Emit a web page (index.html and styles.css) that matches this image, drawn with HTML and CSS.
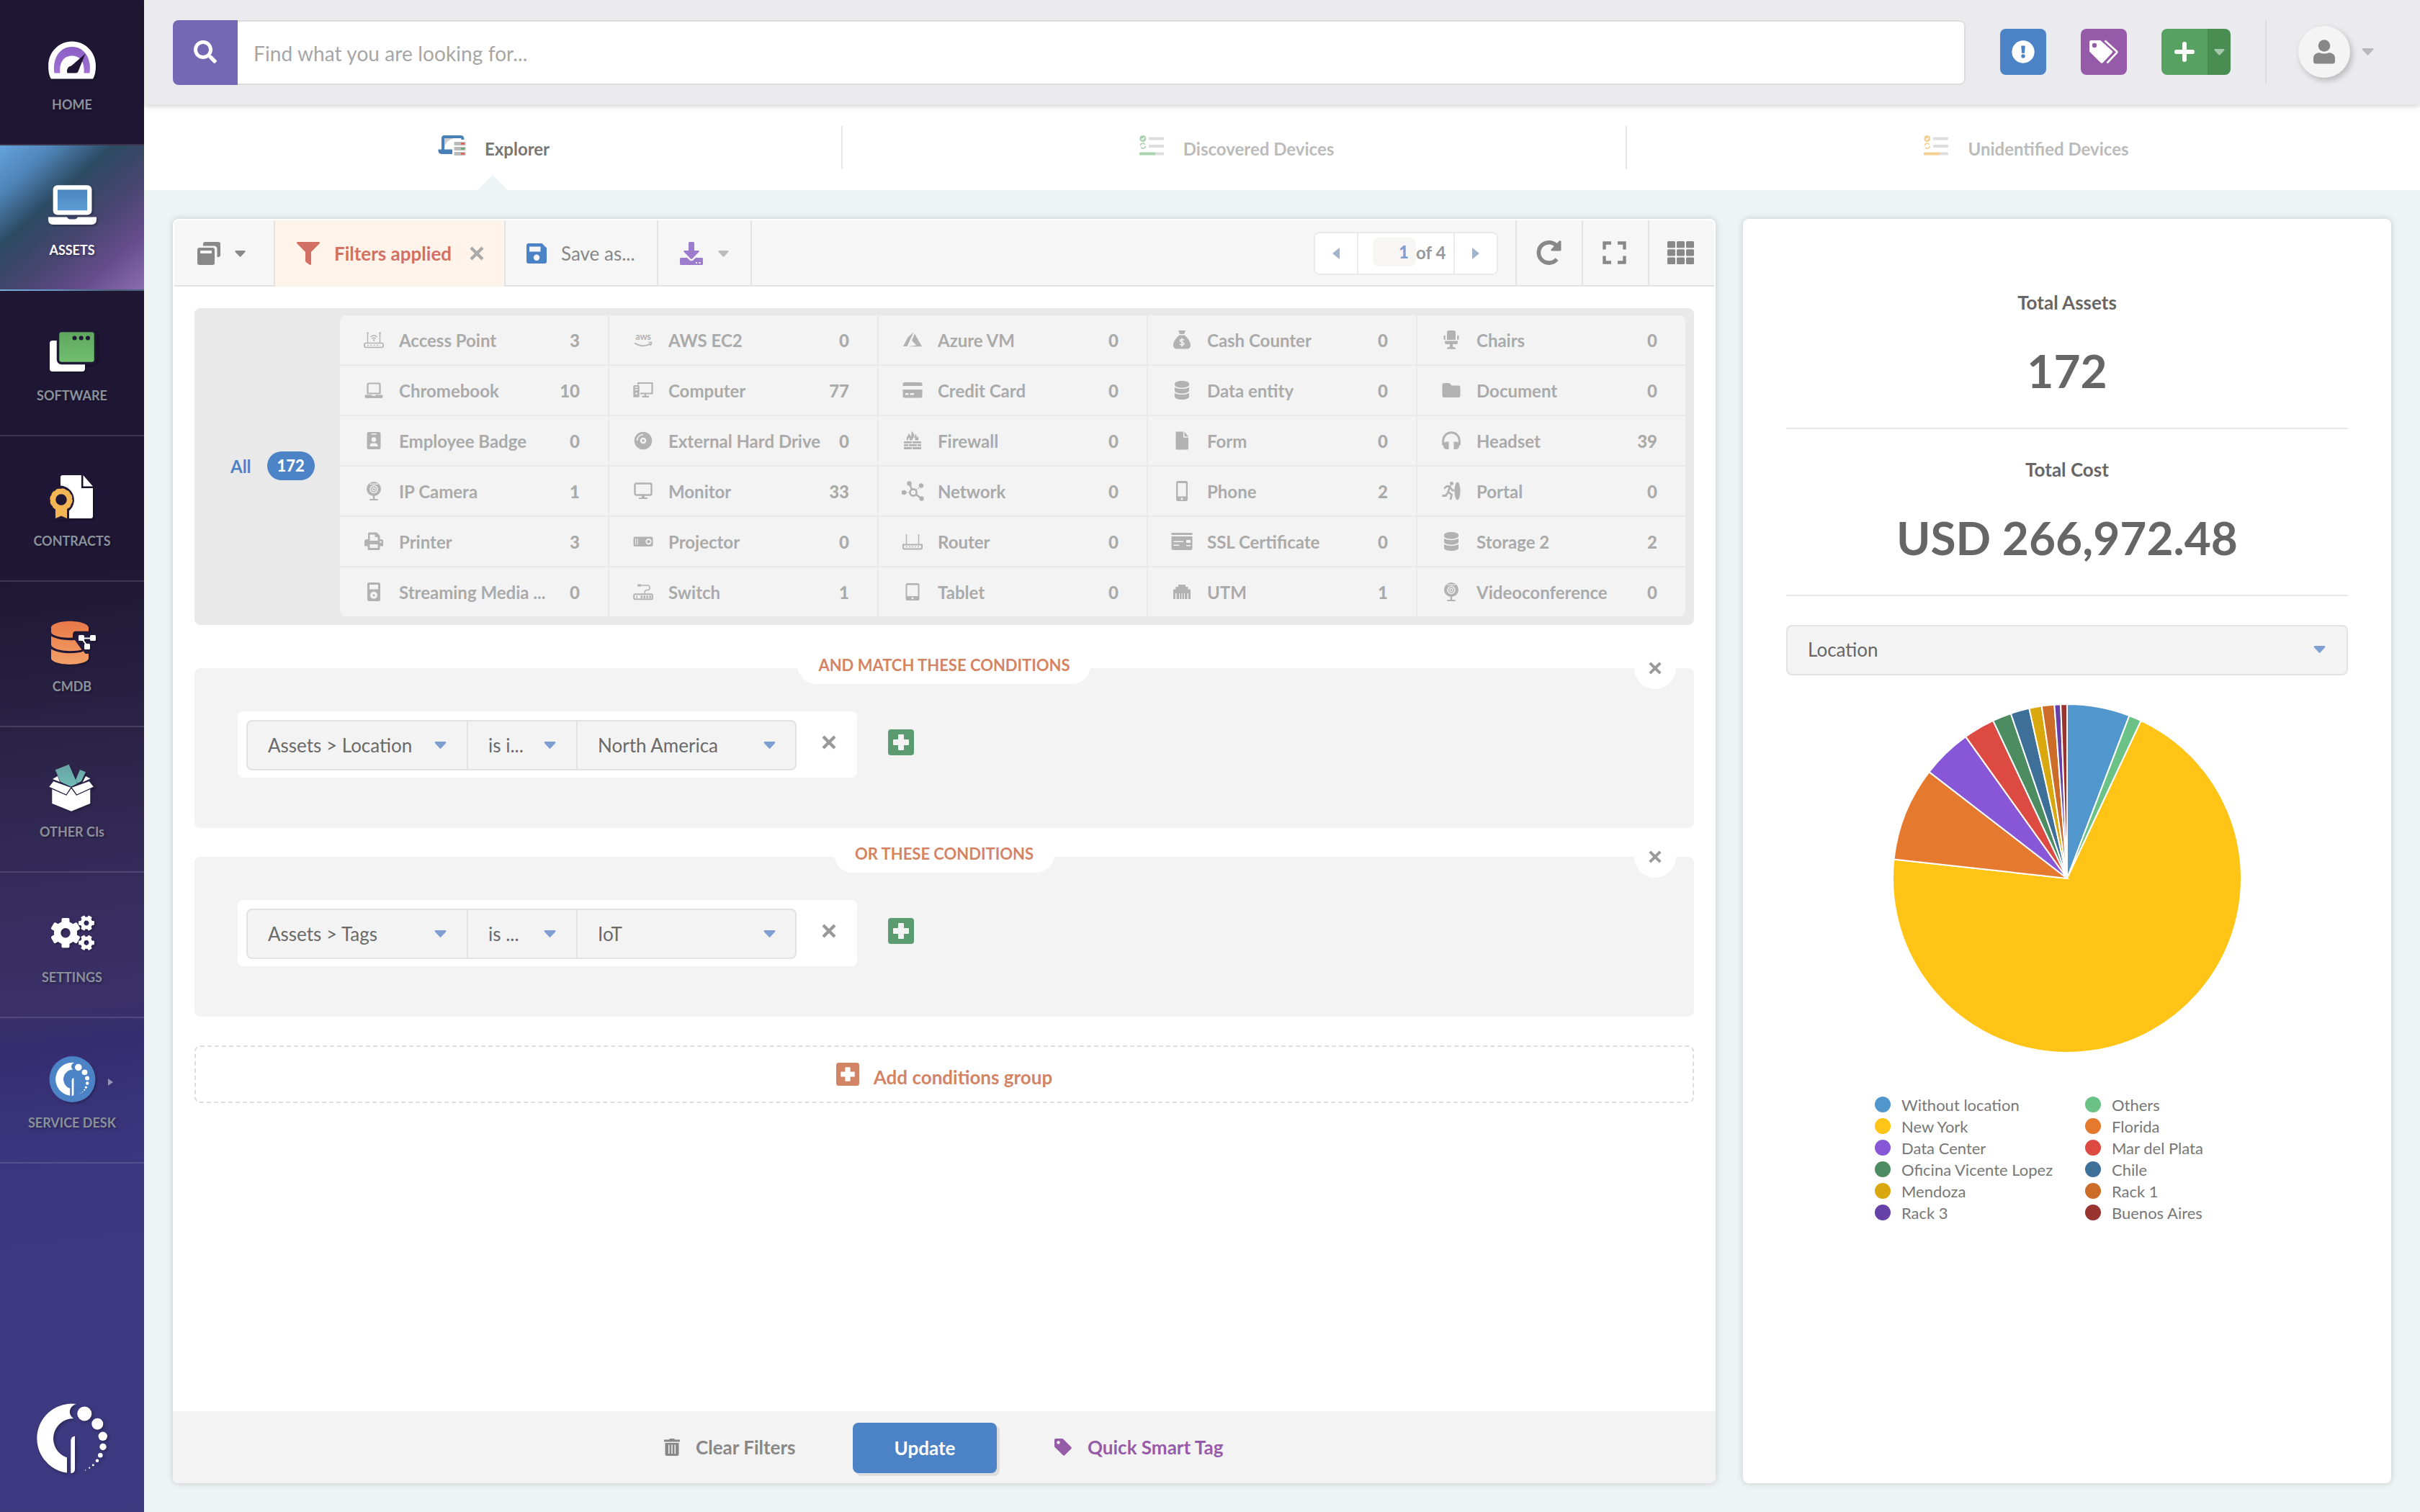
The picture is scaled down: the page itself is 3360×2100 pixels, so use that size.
FILE: index.html
```html
<!DOCTYPE html>
<html lang="en">
<head>
<meta charset="utf-8">
<title>Assets Explorer</title>
<link rel="stylesheet" href="styles.css">
</head>
<body>
<svg class="defs" width="0" height="0" aria-hidden="true">
  <defs>
    <linearGradient id="g-purple" x1="0" y1="0" x2="0" y2="1"><stop offset="0" stop-color="#8a5fc4"/><stop offset="1" stop-color="#a070d4"/></linearGradient>
    <linearGradient id="g-blue" x1="0" y1="0" x2="0" y2="1"><stop offset="0" stop-color="#4a82bd"/><stop offset="1" stop-color="#5f9fd6"/></linearGradient>
    <linearGradient id="g-green" x1="0" y1="0" x2="0" y2="1"><stop offset="0" stop-color="#5ea65e"/><stop offset="1" stop-color="#72c070"/></linearGradient>
    <linearGradient id="g-orange" x1="0" y1="0" x2="0" y2="1"><stop offset="0" stop-color="#e97848"/><stop offset="1" stop-color="#f3a068"/></linearGradient>
    <linearGradient id="g-teal" x1="0" y1="0" x2="0" y2="1"><stop offset="0" stop-color="#65a3a3"/><stop offset="1" stop-color="#73bcb8"/></linearGradient>
  </defs>
  <symbol id="gear" viewBox="-21 -21 42 42">
    <circle r="11.4" fill="none" stroke="currentColor" stroke-width="9.4"/>
    <g fill="currentColor">
      <rect x="-5.5" y="-20.8" width="11" height="9" rx="2"/>
      <rect x="-5.5" y="-20.8" width="11" height="9" rx="2" transform="rotate(60)"/>
      <rect x="-5.5" y="-20.8" width="11" height="9" rx="2" transform="rotate(120)"/>
      <rect x="-5.5" y="-20.8" width="11" height="9" rx="2" transform="rotate(180)"/>
      <rect x="-5.5" y="-20.8" width="11" height="9" rx="2" transform="rotate(240)"/>
      <rect x="-5.5" y="-20.8" width="11" height="9" rx="2" transform="rotate(300)"/>
    </g>
  </symbol>
  <symbol id="brand" viewBox="20 18 100 100">
    <g fill="#fff">
      <path d="M75 20C65 23 62.500 34 71 40A28 28 0 0 0 62 94.500V115.500A48 48 0 0 1 75 20Z"/>
      <path d="M67.300 70C67.800 67 70 65 73 64.500V111C73 114 70.500 116 67.300 116Z"/>
      <circle cx="86.300" cy="33.500" r="10"/><circle cx="104.300" cy="47.700" r="8"/><circle cx="111.800" cy="64.800" r="6.200"/>
      <circle cx="112" cy="79.500" r="4.700"/><circle cx="108.300" cy="91.200" r="3.300"/><circle cx="104" cy="98.800" r="2.300"/>
      <circle cx="98.300" cy="104.700" r="1.500"/><circle cx="93.200" cy="108.700" r="1.100"/><circle cx="87.500" cy="112" r=".7"/>
    </g>
  </symbol>
  <symbol id="caret" viewBox="0 0 16 10"><path fill="currentColor" d="M1.500 0h13a1.300 1.300 0 0 1 1 2.200L9 9.200a1.400 1.400 0 0 1-2 0L.5 2.200A1.300 1.300 0 0 1 1.500 0z"/></symbol>
  <symbol id="cross" viewBox="0 0 20 20"><path stroke="currentColor" stroke-width="4.400" d="M2 2L18 18M18 2L2 18"/></symbol>
  <symbol id="plus-square" viewBox="0 0 36 36"><path fill="currentColor" fill-rule="evenodd" d="M4 0h28a4 4 0 0 1 4 4v28a4 4 0 0 1-4 4H4a4 4 0 0 1-4-4V4a4 4 0 0 1 4-4zM15 7a1 1 0 0 0-1 1v6H8a1 1 0 0 0-1 1v6a1 1 0 0 0 1 1h6v6a1 1 0 0 0 1 1h6a1 1 0 0 0 1-1v-6h6a1 1 0 0 0 1-1v-6a1 1 0 0 0-1-1h-6V8a1 1 0 0 0-1-1z"/></symbol>
  <symbol id="search" viewBox="0 0 512 512"><path fill="currentColor" d="M505 442.700L405.300 343c-4.500-4.500-10.600-7-17-7H372c27.600-35.300 44-79.700 44-128C416 93.100 322.900 0 208 0S0 93.100 0 208s93.100 208 208 208c48.300 0 92.700-16.400 128-44v16.300c0 6.400 2.500 12.500 7 17l99.700 99.700c9.400 9.400 24.600 9.400 33.900 0l28.300-28.300c9.400-9.400 9.400-24.600.1-34zM208 336c-70.700 0-128-57.200-128-128 0-70.700 57.200-128 128-128 70.700 0 128 57.200 128 128 0 70.700-57.200 128-128 128z"/></symbol>
  <symbol id="list" viewBox="0 0 34 28">
    <circle cx="4.800" cy="4.500" r="4.500" fill="currentColor"/><path d="M2.800 4.500l1.600 1.700 2.600-3.200" fill="none" stroke="#fff" stroke-width="1.300"/>
    <circle cx="4.800" cy="14.700" r="3.500" fill="none" stroke="currentColor" stroke-width="1.700" stroke-dasharray="8.500 2.500"/>
    <g fill="#ddd"><rect x="13" y="2.500" width="21" height="4" rx="1"/><rect x="13" y="13" width="21" height="4" rx="1"/><rect x="20" y="23.500" width="14" height="4" rx="1"/></g>
    <rect y="23.500" width="22" height="4" rx="1" fill="currentColor"/>
  </symbol>

  <symbol id="i-ap" viewBox="0 0 28 28"><g fill="none" stroke="currentColor"><rect x="1" y="18.500" width="26" height="6" rx="2" stroke-width="1.700"/><path stroke-width="1.400" d="M5.500 5v13M22.500 5v13M9.500 10q4.500-4.500 9 0M11.500 12.500q2.500-2.500 5 0"/><path stroke-width="1.600" stroke-dasharray="1.800 2.600" d="M5 21.500h18"/></g><circle cx="14" cy="14.500" r="1.200" fill="currentColor"/><circle cx="5.500" cy="4.500" r="1.300" fill="currentColor"/><circle cx="22.500" cy="4.500" r="1.300" fill="currentColor"/></symbol>
  <symbol id="i-router" viewBox="0 0 28 28"><g fill="none" stroke="currentColor"><path stroke-width="2" d="M1 18.500h26v4a2 2 0 0 1-2 2H3a2 2 0 0 1-2-2z"/><path stroke-width="1.400" d="M5.500 4v14M22.500 4v14"/><path stroke-width="1.600" stroke-dasharray="1.800 2.200" d="M5 21.500h18"/></g></symbol>
  <symbol id="i-azure" viewBox="0 0 28 28"><path fill="currentColor" d="M15.500 3.500L7.500 10.500 1 23h5.500zM17 5.500l-4 9.500 6.500 6.500-11.500 1.800H27z"/></symbol>
  <symbol id="i-money" viewBox="0 0 28 28"><path fill="currentColor" d="M9 1h10l-2 5h-6zM10.500 7.500h7C22 11 26 16.500 26 21.500c0 3-2 5-5 5H7c-3 0-5-2-5-5 0-5 4-10.500 8.500-14z"/><path fill="none" stroke="#f3f3f3" stroke-width="1.600" d="M17 14.500c-1-1.500-5.600-1.500-5.600.7s5.400 1.600 5.400 4-4.800 2.300-5.800.5M14 11.500v12"/></symbol>
  <symbol id="i-chair" viewBox="0 0 28 28"><path fill="currentColor" d="M10.500 1h7a2.500 2.500 0 0 1 2.500 2.500V14H8V3.500A2.500 2.500 0 0 1 10.500 1zM3.500 8h2.300v6H5a1.500 1.500 0 0 1-1.500-1.500zM22.200 8h2.300v4.500A1.500 1.500 0 0 1 23 14h-.8zM5 15.500h18V18a2 2 0 0 1-2 2h-5v3.500l4 1.500v1.800H8V25l4-1.500V20H7a2 2 0 0 1-2-2z"/></symbol>
  <symbol id="i-laptop" viewBox="0 0 28 28"><path fill="none" stroke="currentColor" stroke-width="2.200" d="M5.500 18.500V6a1.500 1.500 0 0 1 1.500-1.500h14A1.500 1.500 0 0 1 22.500 6v12.500z"/><path fill="currentColor" d="M1.500 20.500h9.500l1 1.200h4l1-1.200h9.500v2.200a2.300 2.300 0 0 1-2.300 2.300H3.800a2.300 2.300 0 0 1-2.300-2.300z"/></symbol>
  <symbol id="i-pc" viewBox="0 0 28 28"><path fill="none" stroke="currentColor" stroke-width="2.200" d="M7 6V4h19.500v14.500H10M17 18.500v4M12.500 22.800h9.500"/><path fill="currentColor" fill-rule="evenodd" d="M1.500 7h6a1.200 1.200 0 0 1 1.200 1.200V22.500a1.200 1.200 0 0 1-1.200 1.200h-6A1.200 1.200 0 0 1 .3 22.500V8.200A1.200 1.200 0 0 1 1.500 7zM2.500 9v1.500h4V9zM2.500 12.500V14h4v-1.500zM4.500 17a1.400 1.400 0 1 0 0 2.800 1.400 1.400 0 0 0 0-2.800z"/></symbol>
  <symbol id="i-card" viewBox="0 0 28 28"><path fill="currentColor" fill-rule="evenodd" d="M3 3h22a2.500 2.500 0 0 1 2.500 2.500V8H.5V5.500A2.500 2.500 0 0 1 3 3zM.5 13h27v9a2.500 2.500 0 0 1-2.500 2.500H3A2.500 2.500 0 0 1 .5 22zM4 18v2.500h4.500V18zM10.500 18v2.500H16V18z"/></symbol>
  <symbol id="i-db" viewBox="0 0 28 28"><path fill="currentColor" d="M14 1c6 0 10 1.700 10 4v1.500c0 2.300-4 4-10 4s-10-1.700-10-4V5c0-2.300 4-4 10-4zM4 9.800c2 1.500 5.700 2.300 10 2.300s8-.8 10-2.300v4.700c0 2.300-4 4-10 4s-10-1.700-10-4zM4 17.800c2 1.500 5.700 2.300 10 2.300s8-.8 10-2.300V23c0 2.300-4 4-10 4S4 25.300 4 23z"/></symbol>
  <symbol id="i-folder" viewBox="0 0 28 28"><path fill="currentColor" d="M4 4h7.500l3 3.500H24A2.500 2.500 0 0 1 26.500 10v11.500A2.500 2.500 0 0 1 24 24H4a2.500 2.500 0 0 1-2.500-2.500v-15A2.500 2.500 0 0 1 4 4z"/></symbol>
  <symbol id="i-badge" viewBox="0 0 28 28"><path fill="currentColor" fill-rule="evenodd" d="M7 2h14a2.500 2.500 0 0 1 2.500 2.500v19A2.500 2.500 0 0 1 21 26H7a2.500 2.500 0 0 1-2.500-2.500v-19A2.500 2.500 0 0 1 7 2zM10.500 4v1.500h7V4zM14 9.300a3.200 3.200 0 1 0 0 6.500 3.200 3.200 0 0 0 0-6.500zM8.500 22h11v-1c0-2-1.500-3.500-3.500-3.500h-4c-2 0-3.500 1.500-3.500 3.500z"/></symbol>
  <symbol id="i-disc" viewBox="0 0 28 28"><circle cx="14" cy="14" r="8.300" fill="none" stroke="currentColor" stroke-width="8"/><circle cx="14" cy="14" r="1.800" fill="currentColor"/><path fill="none" stroke="#f3f3f3" stroke-width="1.600" d="M5.500 14A8.500 8.500 0 0 1 14 5.500"/></symbol>
  <symbol id="i-fire" viewBox="0 0 28 28"><path fill="currentColor" d="M6 13.500C4.500 9 8.500 8 8.500 4c2 1 2.500 3 2.500 4.500C13 6.500 13 3.500 12 1c4 1.500 4.500 5 4.500 8 1-1 1.500-2.500 1.200-4.500 2 1.500 2 3 1.800 5 1-.3 1.500-1.200 1.500-2 1.500 2 1.500 4.500 1 6h-5c1.500-2 0-4-1-5-.5 2-2.500 3-2 5H10c.5-1.500 0-3-1-4-.5 1.500-1.500 2.500-1 4zM2 15h11v2.800H2zM14 15h12v2.800H14zM2 19h6v2.800H2zM9 19h11v2.800H9zM21 19h5v2.800h-5zM2 23h11v3H2zM14 23h12v3H14z"/></symbol>
  <symbol id="i-file" viewBox="0 0 28 28"><path fill="currentColor" d="M6 1.500h10v8.300h7V25a1.500 1.500 0 0 1-1.500 1.500h-14A1.500 1.500 0 0 1 5.500 25V3zM17.500 1.500L23 8.300h-5.500z"/></symbol>
  <symbol id="i-head" viewBox="0 0 28 28"><path fill="none" stroke="currentColor" stroke-width="3" d="M2.700 20.500V14a11.300 11.300 0 0 1 22.600 0v6.500"/><path fill="currentColor" d="M7.500 15.500h3V26h-3a4.500 4.500 0 0 1-4.500-4.500V20a4.500 4.500 0 0 1 4.500-4.500zM17.500 15.500h3A4.500 4.500 0 0 1 25 20v1.500a4.500 4.500 0 0 1-4.500 4.500h-3z"/></symbol>
  <symbol id="i-cam" viewBox="0 0 28 28"><circle cx="14" cy="11" r="10" fill="currentColor"/><circle cx="14" cy="11.500" r="5" fill="none" stroke="#f3f3f3" stroke-width="1.500"/><circle cx="14" cy="11.500" r="2.200" fill="none" stroke="#f3f3f3" stroke-width="1.200"/><path stroke="#f3f3f3" stroke-width="1.200" d="M8 4.200h12"/><path fill="currentColor" d="M12.800 20h2.400v5h4.500v2H8.300v-2h4.500z"/></symbol>
  <symbol id="i-mon" viewBox="0 0 28 28"><rect x="2.500" y="3.500" width="23" height="16" rx="2" fill="none" stroke="currentColor" stroke-width="2.400"/><path fill="currentColor" d="M12 20h4v3h4v2H8v-2h4z"/></symbol>
  <symbol id="i-net" viewBox="0 0 32 28"><g fill="currentColor"><circle cx="4" cy="16" r="3.200"/><circle cx="11.500" cy="3.500" r="3.200"/><circle cx="28" cy="6.500" r="3.200"/><circle cx="28.500" cy="24.500" r="3.200"/></g><circle cx="17" cy="16" r="4.600" fill="none" stroke="currentColor" stroke-width="2.600"/><path stroke="currentColor" stroke-width="2.400" d="M12 4l3 8M21 19l7 5"/><path stroke="currentColor" stroke-width="1.400" stroke-dasharray="1.600 1.600" d="M7 16h5.500M21 12.500l5-4"/></symbol>
  <symbol id="i-phone" viewBox="0 0 28 28"><path fill="currentColor" fill-rule="evenodd" d="M8.500 0h11A2.500 2.500 0 0 1 22 2.500v23a2.500 2.500 0 0 1-2.500 2.500h-11A2.500 2.500 0 0 1 6 25.500v-23A2.500 2.500 0 0 1 8.500 0zM8.300 3v18.500h11.400V3zM14 23.200a1.600 1.600 0 1 0 0 3.200 1.600 1.600 0 0 0 0-3.200z"/></symbol>
  <symbol id="i-portal" viewBox="0 0 28 28"><g fill="currentColor"><ellipse cx="22.500" cy="14" rx="4" ry="12.500"/><circle cx="14.500" cy="3.500" r="2.500"/></g><path fill="none" stroke="currentColor" stroke-width="2.800" stroke-linejoin="round" d="M4 10.500l3.500-3h5l-3 7.500 5 4-1.500 7M1.500 20.500h5l2.500-4M12.500 9l3 4h3"/></symbol>
  <symbol id="i-print" viewBox="0 0 28 28"><path fill="currentColor" fill-rule="evenodd" d="M7.500 1.500H18l4.500 4.500v5H24a3 3 0 0 1 3 3v6.500h-4.500v4a1.500 1.500 0 0 1-1.500 1.500H7a1.500 1.500 0 0 1-1.500-1.500v-4H1V14a3 3 0 0 1 3-3h2V3a1.500 1.500 0 0 1 1.500-1.500zM8.500 4.500V13h11V8h-4V4.500zM8.500 18v5h11v-5zM23.500 13.500a1.300 1.300 0 1 0 0 2.600 1.300 1.300 0 0 0 0-2.600z"/></symbol>
  <symbol id="i-proj" viewBox="0 0 28 28"><path fill="currentColor" fill-rule="evenodd" d="M3 7.500h22a2.500 2.500 0 0 1 2.500 2.500v8.500A2.500 2.500 0 0 1 25 21H3a2.500 2.500 0 0 1-2.500-2.500V10A2.500 2.500 0 0 1 3 7.500zM3 10v8.500h1V10zM5.700 10v8.500h1V10zM21.500 10a4.200 4.200 0 1 0 0 8.400 4.200 4.200 0 0 0 0-8.400z"/><circle cx="21.500" cy="14.200" r="2.300" fill="currentColor"/></symbol>
  <symbol id="i-ssl" viewBox="0 0 32 28"><path fill="currentColor" fill-rule="evenodd" d="M1.500 2h29v3h-29zM1.500 7h29v16.500a2.500 2.500 0 0 1-2.500 2.500H4a2.500 2.500 0 0 1-2.500-2.500zM4.500 13.500V15H18v-1.500zM4.500 18.500V20H12v-1.500zM22 12v4h6v-4zM22 19v1.500h6V19z"/></symbol>
  <symbol id="i-ipod" viewBox="0 0 28 28"><path fill="currentColor" fill-rule="evenodd" d="M7.500 1h13A2.500 2.500 0 0 1 23 3.500v21a2.500 2.500 0 0 1-2.500 2.500h-13A2.500 2.500 0 0 1 5 24.500v-21A2.500 2.500 0 0 1 7.500 1zM8 4v6.500h12V4zM14 13.800a5 5 0 1 0 0 10 5 5 0 0 0 0-10zM14 17.300a1.500 1.500 0 1 1 0 3 1.500 1.500 0 0 1 0-3z"/></symbol>
  <symbol id="i-switch" viewBox="0 0 28 28"><path fill="none" stroke="currentColor" stroke-width="1.500" d="M7 5h13a3 3 0 0 1 0 6.500q-4 0-4 4v1.500"/><rect x="6" y="3.500" width="5" height="3" fill="currentColor"/><rect x="1.200" y="17.200" width="25.600" height="7" rx="1.500" fill="none" stroke="currentColor" stroke-width="2"/><path fill="none" stroke="currentColor" stroke-width="3.500" stroke-dasharray="2.600 1.300" d="M10.500 21H25M4.500 21H6"/></symbol>
  <symbol id="i-tablet" viewBox="0 0 28 28"><path fill="currentColor" fill-rule="evenodd" d="M7 2h14a2.500 2.500 0 0 1 2.500 2.500v19A2.500 2.500 0 0 1 21 26H7a2.500 2.500 0 0 1-2.500-2.500v-19A2.500 2.500 0 0 1 7 2zM6.500 4.500V20h15V4.500zM14 21.600a1.400 1.400 0 1 0 0 2.800 1.400 1.400 0 0 0 0-2.800z"/></symbol>
  <symbol id="i-utm" viewBox="0 0 28 28"><path fill="currentColor" d="M9 4h10v3h3.500v3.500H26V24h-3v-8h-1.500v8H18v-8h-1v8h-2.500v-8h-1v8H11v-8h-1v8H6.500v-8H5v8H2V10.500h3.500V7H9z"/></symbol>
</svg>

<div class="app">
  <nav class="sidebar">
    <a class="nav-item"><svg class="nav-icon" viewBox="0 0 80 68"><path fill="#fff" d="M11 59.500C8 55 7 48 7.200 41 7.200 22 22 7.500 40 7.500S73 22 73 41c0 7-1 14-4 18.500z"/><path fill="url(#g-purple)" d="M15.500 51.500C12.500 31 23 15 40 15s27.500 16 24.500 36.500H56.500C58 36 51 27.500 40 27.500S22 36 23.500 51.500z"/><path fill="#1e1632" d="M58.500 24.500L49 48c-.5 2.500-2 3.500-4 3.500H33.500c-1.500-4 .5-9.500 5.500-10z"/></svg><span>HOME</span></a>
    <a class="nav-item active"><svg class="nav-icon" viewBox="0 0 80 68"><rect x="16.800" y="8.300" width="47.500" height="35" rx="3" fill="url(#g-blue)" stroke="#fff" stroke-width="6.300"/><path fill="#fff" d="M7 49.500h26q1.500 3 4.500 3h6q3 0 4.500-3h26V53q0 7-7 7H14q-7 0-7-7z"/></svg><span>ASSETS</span></a>
    <a class="nav-item"><svg class="nav-icon" viewBox="0 0 80 68"><rect x="9" y="19" width="49" height="43" rx="4" fill="#fff"/><rect x="20.500" y="5.500" width="52" height="45" rx="5" fill="url(#g-green)" stroke="#1f1735" stroke-width="3.500"/><g fill="#1f1735"><circle cx="43.500" cy="15.500" r="3"/><circle cx="52.700" cy="15.500" r="3"/><circle cx="62" cy="15.500" r="3"/></g></svg><span>SOFTWARE</span></a>
    <a class="nav-item"><svg class="nav-icon" viewBox="0 0 80 68"><path fill="#fff" d="M27 4h26v18h16v39q0 3-3 3H27q-3 0-3-3V7q0-3 3-3zM55.500 4L69 19.500H55.500z"/><path fill="#201837" d="M25 18.500a20 20 0 0 1 11 35V66H14V53.500a20 20 0 0 1 11-35z"/><path fill="#f4b554" d="M17 49h16v15l-8-3.500-8 3.500z"/><circle cx="25" cy="38" r="11.500" fill="none" stroke="#f4b554" stroke-width="7.500"/><circle cx="25" cy="38" r="14.500" fill="none" stroke="#f4b554" stroke-width="2.500" stroke-dasharray="4.600 3"/></svg><span>CONTRACTS</span></a>
    <a class="nav-item"><svg class="nav-icon" viewBox="0 0 80 68"><path fill="url(#g-orange)" d="M37 4.700c14 0 26 4 26 9v5H45q-3.500 0-4 4v4.800C24 29 11 24 11 20v-6.300c0-5 12-9 26-9zM11 25.500c7 4 19 6.500 33 5.500l9.500 13.500C40 48 14 46 11 38zM11 43.500c10 6.500 34 7.500 45 3l2.500 3.500h4.500v6c0 5-12 8.800-26 8.800S11 61 11 56z"/><path stroke="#fff" stroke-width="2" d="M53 28.500h16M53 28l8 11"/><g fill="#fff"><rect x="49" y="24" width="8" height="8" rx="1.500"/><rect x="65" y="24" width="8" height="8" rx="1.500"/><rect x="57" y="36" width="8" height="8" rx="1.500"/></g></svg><span>CMDB</span></a>
    <a class="nav-item"><svg class="nav-icon" viewBox="0 0 80 68"><path fill="#fff" d="M20 18l-7 4 10 4zM59 18l6.500 3.500-11 5z"/><path fill="url(#g-teal)" d="M16.700 9.300l19-7.600 11.500 26.600-8.500 4.500-15-7zM51 9l8 3.300-6 12.700-5.500 3-2.500-5z"/><path fill="#fff" d="M12.300 36l19.700 8.500 7-9.500 7 9.500L65.300 36v20L39 66.700 12.300 56z"/><path fill="#fff" stroke="#2d254b" stroke-width="1.200" d="M14 24.500l25 9-7 10.500L7.500 33zM64 24.500l-25 9 7.500 10.500L70.500 33z"/></svg><span>OTHER CIs</span></a>
    <a class="nav-item"><svg class="nav-icon nav-gears" viewBox="0 0 80 68"><use href="#gear" x="10" y="12.700" width="42" height="42"/><g transform="rotate(30 60 20)"><use href="#gear" x="49" y="9" width="22" height="22"/></g><g transform="rotate(30 60 47.300)"><use href="#gear" x="49" y="36.300" width="22" height="22"/></g></svg><span>SETTINGS</span></a>
    <a class="nav-item"><svg class="nav-icon" viewBox="0 0 80 68"><circle cx="40.500" cy="35" r="32" fill="#4c82c6"/><use href="#brand" x="17" y="11" width="48" height="48"/></svg><i class="nav-arrow"></i><span>SERVICE DESK</span></a>
    <svg class="brand"><use href="#brand"/></svg>
  </nav>

  <div class="page">
    <header class="topbar">
      <div class="search"><div class="search-btn"><svg width="32" height="32"><use href="#search"/></svg></div><div class="search-input">Find what you are looking for...</div></div>
      <div class="sq blue"><svg width="32" height="32" viewBox="0 0 32 32"><circle cx="16" cy="16" r="15.700" fill="#fff"/><path fill="#4c82c6" d="M13.300 8.500q0-1 1-1h3.400q1 0 1 1L18 17q-.1 1-1 1h-2q-.9 0-1-1z"/><circle cx="16" cy="22" r="2.700" fill="#4c82c6"/></svg></div>
      <div class="sq violet"><svg width="42" height="34" viewBox="0 0 42 34"><path fill="#fff" fill-rule="evenodd" d="M3.500 1H15q1.500 0 2.700 1.200L32.500 15.500q1.500 1.500 0 3L19.800 32q-1.700 1.500-3.300 0L2 17.500Q1 16.500 1 15V3.500Q1 1 3.500 1zM8 4.800a3.200 3.200 0 1 0 0 6.400 3.200 3.200 0 0 0 0-6.400z"/><path fill="none" stroke="#fff" stroke-width="2.600" d="M22.500 1.500L39 16.500q.8.800 0 1.600L25.500 32.500"/></svg></div>
      <div class="sq-split"><div class="split-main"><svg width="28" height="28" viewBox="0 0 28 28"><path stroke="#fff" stroke-width="6" stroke-linecap="round" d="M14 3v22M3 14h22"/></svg></div><div class="split-drop"><svg width="15" height="9"><use href="#caret"/></svg></div></div>
      <div class="divider"></div>
      <div class="avatar"><svg width="30" height="34" viewBox="0 0 30 34"><circle cx="15" cy="8.500" r="8.300" fill="#888"/><path fill="#888" d="M0 30v-4q0-7 8-8 3 1.500 7 1.500t7-1.500q8 1 8 8v4q0 3.500-3.500 3.500h-23Q0 33.500 0 30z"/></svg></div>
      <svg class="user-caret" width="17" height="10"><use href="#caret"/></svg>
    </header>

    <div class="tabs">
      <div class="tab current"><svg width="40" height="30" viewBox="0 0 40 30"><path fill="#ccc" d="M9 5h13Q10 8 9 19z"/><path fill="none" stroke="#4a80b8" stroke-width="4" d="M7 21V5q0-2 2-2h23q2.500 0 2.500 4"/><path fill="#4a80b8" d="M.5 20.500H20V27H6q-5 0-5.500-4z"/><g fill="#bbb"><rect x="22.500" y="10" width="16" height="5" rx="1"/><rect x="22.500" y="17" width="16" height="5" rx="1"/><rect x="22.500" y="24" width="16" height="5" rx="1"/></g><path stroke="#e0503c" stroke-width="1.800" d="M32 12.500h5M32 26.500h5"/><path stroke="#4a9e55" stroke-width="1.800" d="M32 19.500h5"/></svg><span>Explorer</span><i class="notch"></i></div>
      <div class="tab discovered"><svg width="34" height="28"><use href="#list"/></svg><span>Discovered Devices</span></div>
      <div class="tab unidentified"><svg width="34" height="28"><use href="#list"/></svg><span>Unidentified Devices</span></div>
    </div>

    <main class="content">
      <section class="panel main-panel">
        <div class="toolbar">
          <div class="tool tool-views"><svg width="32" height="32" viewBox="0 0 32 32"><path fill="#888" d="M11 0h18q3 0 3 3v15q0 3-3 3h-1.500V10q0-4.500-4.500-4.500H8V3q0-3 3-3z"/><path fill="#888" fill-rule="evenodd" d="M3 8h18q3 0 3 3v18q0 3-3 3H3q-3 0-3-3V11q0-3 3-3zm2 4q-1 0-1 1v2q0 1 1 1h14q1 0 1-1v-2q0-1-1-1z"/></svg><svg width="15" height="9"><use href="#caret"/></svg></div>
          <div class="tool tool-filters"><svg width="32" height="32" viewBox="0 0 32 32"><path fill="#d37065" d="M1.200 0h29.600q2 .5.800 2.200L20 14v17q-.5 1.500-2 .7l-5-3.500q-1-.7-1-2V14L.4 2.200Q-.8.500 1.200 0z"/></svg><span>Filters applied</span><svg class="tool-close" width="20" height="20"><use href="#cross"/></svg></div>
          <div class="tool tool-save"><svg width="28" height="28" viewBox="0 0 28 28"><path fill="#4c82c6" fill-rule="evenodd" d="M3 0h18.500L28 6.500V25q0 3-3 3H3q-3 0-3-3V3q0-3 3-3zM4 4.500v7h15.500v-7zM14 15.500a4.200 4.200 0 1 0 0 8.400 4.200 4.200 0 0 0 0-8.400z"/></svg><span>Save as...</span></div>
          <div class="tool tool-download"><svg width="32" height="32" viewBox="0 0 32 32"><path fill="#9e7ccd" d="M13.500 0h5q1.500 0 1.500 1.500V12h6q1.500.3.500 1.700L17 23.500q-1 .8-2 0L5.500 13.700q-1-1.400.5-1.700h6V1.500Q12 0 13.500 0z"/><path fill="#9e7ccd" fill-rule="evenodd" d="M1.500 22H10l4 3.700q2 1.300 4 0L22 22h8.500q1.500 0 1.500 1.500v7q0 1.500-1.500 1.500h-29Q0 32 0 30.500v-7Q0 22 1.500 22zM22 28v2h2v-2zM26.500 28v2h2v-2z"/></svg><svg width="15" height="9"><use href="#caret"/></svg></div>
          <div class="spacer"></div>
          <div class="pager"><div class="pg-btn"><i class="pg-prev"></i></div><div class="pg-text"><b>1</b><span>of 4</span></div><div class="pg-btn"><i class="pg-next"></i></div></div>
          <div class="tool-sq"><svg width="36" height="36" viewBox="0 0 36 36"><path fill="none" stroke="#888" stroke-width="5.600" d="M29.500 27A14.200 14.200 0 1 1 30 9.500"/><path fill="#888" d="M35.500 2.500V14q0 1.500-1.500 1.500H22.500q-2-.5-1-2L33 1.500q2-1 2.500 1z"/></svg></div>
          <div class="tool-sq"><svg width="33" height="32" viewBox="0 0 33 32"><path fill="none" stroke="#888" stroke-width="4.400" d="M2.500 11.500v-9H12M21 2.500h9.500v9M30.500 20.500v9H21M12 29.500H2.500v-9"/></svg></div>
          <div class="tool-sq"><svg width="37" height="32" viewBox="0 0 37 32"><g fill="#888"><rect width="11" height="9.300" rx="1.500"/><rect x="13" width="11" height="9.300" rx="1.500"/><rect x="26" width="11" height="9.300" rx="1.500"/><rect y="11.300" width="11" height="9.300" rx="1.500"/><rect x="13" y="11.300" width="11" height="9.300" rx="1.500"/><rect x="26" y="11.300" width="11" height="9.300" rx="1.500"/><rect y="22.600" width="11" height="9.300" rx="1.500"/><rect x="13" y="22.600" width="11" height="9.300" rx="1.500"/><rect x="26" y="22.600" width="11" height="9.300" rx="1.500"/></g></svg></div>
        </div>

        <div class="body">
          <div class="types">
            <div class="types-all"><span>All</span><b>172</b></div>
            <div class="types-grid">
              <div class="type"><svg><use href="#i-ap"/></svg><span>Access Point</span><b>3</b></div>
              <div class="type"><svg viewBox="0 0 28 28"><text x="14" y="14" text-anchor="middle" class="aws-text" fill="currentColor">aws</text><path fill="none" stroke="currentColor" stroke-width="1.700" d="M2 18.500q11.500 7 22 1M21.500 17.500h4q0 2.500-1.500 4.500"/></svg><span>AWS EC2</span><b>0</b></div>
              <div class="type"><svg><use href="#i-azure"/></svg><span>Azure VM</span><b>0</b></div>
              <div class="type"><svg><use href="#i-money"/></svg><span>Cash Counter</span><b>0</b></div>
              <div class="type"><svg><use href="#i-chair"/></svg><span>Chairs</span><b>0</b></div>
              <div class="type"><svg><use href="#i-laptop"/></svg><span>Chromebook</span><b>10</b></div>
              <div class="type"><svg><use href="#i-pc"/></svg><span>Computer</span><b>77</b></div>
              <div class="type"><svg><use href="#i-card"/></svg><span>Credit Card</span><b>0</b></div>
              <div class="type"><svg><use href="#i-db"/></svg><span>Data entity</span><b>0</b></div>
              <div class="type"><svg><use href="#i-folder"/></svg><span>Document</span><b>0</b></div>
              <div class="type"><svg><use href="#i-badge"/></svg><span>Employee Badge</span><b>0</b></div>
              <div class="type"><svg><use href="#i-disc"/></svg><span>External Hard Drive</span><b>0</b></div>
              <div class="type"><svg><use href="#i-fire"/></svg><span>Firewall</span><b>0</b></div>
              <div class="type"><svg><use href="#i-file"/></svg><span>Form</span><b>0</b></div>
              <div class="type"><svg><use href="#i-head"/></svg><span>Headset</span><b>39</b></div>
              <div class="type"><svg><use href="#i-cam"/></svg><span>IP Camera</span><b>1</b></div>
              <div class="type"><svg><use href="#i-mon"/></svg><span>Monitor</span><b>33</b></div>
              <div class="type wide"><svg><use href="#i-net"/></svg><span>Network</span><b>0</b></div>
              <div class="type"><svg><use href="#i-phone"/></svg><span>Phone</span><b>2</b></div>
              <div class="type"><svg><use href="#i-portal"/></svg><span>Portal</span><b>0</b></div>
              <div class="type"><svg><use href="#i-print"/></svg><span>Printer</span><b>3</b></div>
              <div class="type"><svg><use href="#i-proj"/></svg><span>Projector</span><b>0</b></div>
              <div class="type"><svg><use href="#i-router"/></svg><span>Router</span><b>0</b></div>
              <div class="type wide"><svg><use href="#i-ssl"/></svg><span>SSL Certificate</span><b>0</b></div>
              <div class="type"><svg><use href="#i-db"/></svg><span>Storage 2</span><b>2</b></div>
              <div class="type"><svg><use href="#i-ipod"/></svg><span>Streaming Media ...</span><b>0</b></div>
              <div class="type"><svg><use href="#i-switch"/></svg><span>Switch</span><b>1</b></div>
              <div class="type"><svg><use href="#i-tablet"/></svg><span>Tablet</span><b>0</b></div>
              <div class="type"><svg><use href="#i-utm"/></svg><span>UTM</span><b>1</b></div>
              <div class="type"><svg><use href="#i-cam"/></svg><span>Videoconference</span><b>0</b></div>
            </div>
          </div>

          <div class="group">
            <div class="group-title">AND MATCH THESE CONDITIONS</div>
            <div class="group-close"><svg width="18" height="18"><use href="#cross"/></svg></div>
            <div class="cond-row">
              <div class="cond"><div class="selects"><div class="sel sel-field"><span>Assets &gt; Location</span><svg width="17" height="10"><use href="#caret"/></svg></div><div class="sel sel-op"><span>is i...</span><svg width="17" height="10"><use href="#caret"/></svg></div><div class="sel sel-value"><span>North America</span><svg width="17" height="10"><use href="#caret"/></svg></div></div><svg class="cond-x" width="20" height="20"><use href="#cross"/></svg></div>
              <svg class="cond-add" width="36" height="36"><use href="#plus-square"/></svg>
            </div>
          </div>
          <div class="group">
            <div class="group-title">OR THESE CONDITIONS</div>
            <div class="group-close"><svg width="18" height="18"><use href="#cross"/></svg></div>
            <div class="cond-row">
              <div class="cond"><div class="selects"><div class="sel sel-field"><span>Assets &gt; Tags</span><svg width="17" height="10"><use href="#caret"/></svg></div><div class="sel sel-op"><span>is ...</span><svg width="17" height="10"><use href="#caret"/></svg></div><div class="sel sel-value"><span>IoT</span><svg width="17" height="10"><use href="#caret"/></svg></div></div><svg class="cond-x" width="20" height="20"><use href="#cross"/></svg></div>
              <svg class="cond-add" width="36" height="36"><use href="#plus-square"/></svg>
            </div>
          </div>
          <div class="add-group"><svg width="32" height="32"><use href="#plus-square"/></svg><span>Add conditions group</span></div>
        </div>

        <div class="footer">
          <div class="foot-link clear"><svg width="22" height="24" viewBox="0 0 22 24"><path fill="currentColor" fill-rule="evenodd" d="M8 0h6l1 1.500h7v3H0v-3h7zM1.500 6h19v15.500q0 2.500-2.500 2.500H4q-2.500 0-2.500-2.500zM6 8.500V21h1.500V8.500zM10.200 8.500V21h1.500V8.500zM14.500 8.500V21H16V8.500z"/></svg><span>Clear Filters</span></div>
          <div class="update">Update</div>
          <div class="foot-link quick"><svg width="24" height="24" viewBox="0 0 24 24"><path fill="currentColor" fill-rule="evenodd" d="M2 0h8.500q1 0 1.800.8L23.400 12q.9 1 0 2l-9.300 9.300q-1 .9-2 0L.8 12.300Q0 11.500 0 10.500V2q0-2 2-2zM5.500 3.300a2.200 2.200 0 1 0 0 4.400 2.200 2.200 0 0 0 0-4.400z"/></svg><span>Quick Smart Tag</span></div>
        </div>
      </section>

      <aside class="panel side-panel">
        <div class="stat"><h2>Total Assets</h2><p>172</p></div>
        <div class="stat"><h2>Total Cost</h2><p>USD 266,972.48</p></div>
        <div class="side-select"><span>Location</span><svg width="17" height="10"><use href="#caret"/></svg></div>
        <svg class="pie" viewBox="-242 -242 484 484" id="pie"></svg>
        <div class="legend" id="legend"></div>
      </aside>
    </main>
  </div>
</div>
<script src="chart.js"></script>
</body>
</html>
```
FILE: chart.js
```js
// Assets per location: label, count, colour
const data = [
  ["Without location", 10, "#5296ce"], ["Others", 2, "#6ac286"],
  ["New York", 120, "#ffc415"], ["Florida", 15, "#e57a2f"],
  ["Data Center", 8, "#8757d8"], ["Mar del Plata", 5, "#dd4a42"],
  ["Oficina Vicente Lopez", 3, "#4d8c60"], ["Chile", 3, "#3d6f99"],
  ["Mendoza", 2, "#d9a80f"], ["Rack 1", 2, "#cc6c28"],
  ["Rack 3", 1, "#6642a8"], ["Buenos Aires", 1, "#99332f"]
];
const total = data.reduce((sum, d) => sum + d[1], 0);
const R = 242;
const at = n => {
  const a = n / total * 2 * Math.PI;
  return (R * Math.sin(a)).toFixed(2) + " " + (-R * Math.cos(a)).toFixed(2);
};
let start = 0, slices = "", legend = "";
for (const [label, count, color] of data) {
  const end = start + count;
  const large = count > total / 2 ? 1 : 0;
  slices += `<path d="M0 0L${at(start)}A${R} ${R} 0 ${large} 1 ${at(end)}Z" fill="${color}" stroke="#fff" stroke-width="2"/>`;
  legend += `<div class="legend-item"><i style="background:${color}"></i><span>${label}</span></div>`;
  start = end;
}
document.getElementById("pie").innerHTML = slices;
document.getElementById("legend").innerHTML = legend;
```
FILE: styles.css
```css
* { box-sizing: border-box; margin: 0; padding: 0; }
body { font-family: Lato, "Open Sans", sans-serif; font-size: 26px; color: #666; background: #eef3f6; }
svg { display: block; flex: none; }
.defs { position: absolute; }
.app { display: flex; width: 3360px; height: 2100px; overflow: hidden; }

.sidebar { width: 200px; flex: none; display: flex; flex-direction: column; background: linear-gradient(173deg, #1e1632 0%, #1f1735 38%, #2a2244 48%, #352b5b 58%, #3b3068 66%, #352d70 69%, #3c3880 77%, #3e3a80 100%); }
.nav-item { position: relative; height: 202px; padding-top: 50px; border-bottom: 2px solid rgba(255, 255, 255, .13); display: flex; flex-direction: column; align-items: center; color: #8b919b; font-size: 18px; font-weight: 700; line-height: 24px; text-shadow: 2px 2px 3px rgba(0, 0, 0, .3); }
.nav-item.active { color: #fff; background: linear-gradient(138.5deg, #66a3dc 0%, #4f84b8 18%, #2c4a62 37%, #45456d 57%, #654c8c 79%, #8b6db2 100%); }
.nav-icon { width: 80px; height: 68px; margin-bottom: 15px; overflow: visible; filter: drop-shadow(2px 2px 1px rgba(0, 0, 0, .25)); }
.nav-gears { color: #fff; }
.nav-arrow { position: absolute; left: 150px; top: 84px; border: 5px solid transparent; border-left: 7px solid #9892b8; border-right: 0; }
.brand { width: 100px; height: 100px; margin: auto 49px 52px 51px; filter: drop-shadow(2px 2px 2px rgba(0, 0, 0, .3)); }

.page { flex: 1; display: flex; flex-direction: column; min-width: 0; }
.topbar { position: relative; z-index: 1; height: 145px; flex: none; padding: 28px 64px 0 40px; display: flex; align-items: flex-start; background: #ebebef; box-shadow: 0 2px 8px rgba(0, 0, 0, .2); }
.search { flex: 1; display: flex; height: 90px; border-radius: 8px; overflow: hidden; margin-right: 48px; }
.search-btn { width: 90px; background: #7468b4; color: #fff; display: flex; align-items: center; justify-content: center; padding-bottom: 2px; }
.search-input { flex: 1; background: #fff; border: 2px solid #ddd; border-left: 0; border-radius: 0 8px 8px 0; padding-left: 22px; line-height: 88px; font-size: 28px; letter-spacing: .1px; color: #a6a6a6; }
.sq, .sq-split { height: 64px; margin: 12px 48px 0 0; border-radius: 8px; overflow: hidden; display: flex; align-items: center; justify-content: center; }
.sq { width: 64px; }
.blue { background: #4c82c6; }
.violet { background: #955ba8; }
.sq-split { width: 96px; align-items: stretch; }
.split-main { width: 64px; background: #57a262; display: flex; align-items: center; justify-content: center; }
.split-drop { width: 32px; background: #498d52; color: #a6c8aa; display: flex; align-items: center; justify-content: center; }
.divider { width: 2px; height: 88px; background: #ddd; }
.avatar { width: 72px; height: 72px; margin: 8px 16px 0 44px; border-radius: 50%; background: #f4f4f4; box-shadow: 3px 4px 8px rgba(0, 0, 0, .22); display: flex; align-items: center; justify-content: center; }
.user-caret { margin-top: 39px; color: #b9b9bc; }

.tabs { height: 119px; flex: none; display: grid; grid-template-columns: 970px 1089px 1fr; align-items: center; background: #fff; }
.tab { position: relative; height: 60px; display: flex; justify-content: center; align-items: center; padding-left: 4px; font-size: 24px; font-weight: 700; color: #bbb; border-right: 2px solid #e6e6e6; }
.tab:last-child { border-right: 0; }
.tab svg { margin: -5px 27px 0 0; }
.tab span { padding-top: 4px; }
.tab.current { color: #777; padding-left: 3px; }
.tab.current svg { margin-right: 25px; }
.discovered { padding-left: 7px; }
.discovered svg { color: #aad3ad; }
.unidentified { padding-left: 8px; }
.unidentified svg { color: #f5d090; }
.notch { position: absolute; left: 462px; bottom: -30px; width: 0; border: 22px solid transparent; border-top: 0; border-bottom-color: #eef3f6; }

.content { flex: 1; display: flex; gap: 38px; padding: 40px 40px 40px 40px; }
.panel { background: #fff; border-radius: 8px; box-shadow: 0 0 10px rgba(0, 0, 0, .18); overflow: hidden; display: flex; flex-direction: column; }
.main-panel { width: 2142px; }
.side-panel { width: 900px; padding: 89px 60px 0; }

.toolbar { height: 92px; flex: none; margin: 2px 2px 0; background: #f6f6f6; display: flex; box-shadow: inset 0 -2px #e3e3e3; border-radius: 6px 6px 0 0; }
.tool { display: flex; align-items: center; border-right: 2px solid #e3e3e3; color: #888; }
.tool-views { width: 140px; padding-left: 32px; gap: 20px; }
.tool-filters { width: 320px; padding-left: 30px; gap: 20px; background: #fff3ea; color: #d37065; font-weight: 700; }
.tool-close { color: #aaa; margin-left: 5px; }
.tool-save { width: 212px; padding-left: 29px; gap: 20px; }
.tool-download { width: 130px; padding-left: 30px; gap: 21px; color: #bcbcbc; }
.spacer { flex: 1; }
.pager { margin: 16px 24px 0 0; width: 256px; height: 60px; background: #fff; border: 2px solid #eaeaea; border-radius: 8px; display: flex; font-size: 24px; color: #999; }
.pg-btn { width: 58px; display: flex; align-items: center; justify-content: center; }
.pg-text { flex: 1; border: solid #eaeaea; border-width: 0 2px; display: flex; align-items: center; padding-left: 20px; font-weight: 700; }
.pg-text b { width: 60px; height: 40px; line-height: 40px; padding-right: 10px; margin-top: -4px; text-align: right; border-radius: 8px; background: #f8f5f5; color: #7f9fd0; }
.pg-text span { margin-top: -3px; }
.pg-prev, .pg-next { border: 8px solid transparent; }
.pg-prev { border-left: 0; border-right: 10px solid #a3b3cc; }
.pg-next { border-right: 0; border-left: 10px solid #a3b3cc; }
.tool-sq { width: 92px; padding: 0 3px 3px 0; border-left: 2px solid #e3e3e3; display: flex; align-items: center; justify-content: center; }

.body { flex: 1; padding: 30px 30px 0; }
.types { display: flex; height: 440px; padding: 10px 12px 12px 0; border-radius: 8px; background: #e9e9e9; font-weight: 700; font-size: 24px; }
.types-all { width: 202px; padding-left: 50px; display: flex; align-items: center; gap: 22px; color: #4c82c6; }
.types-all b { width: 66px; height: 40px; line-height: 39px; border-radius: 20px; background: #4c82c6; color: #fff; font-size: 22px; text-align: center; }
.types-grid { flex: 1; display: grid; grid-template: repeat(6, 68px) / repeat(5, 372px); gap: 2px; border-radius: 8px; overflow: hidden; }
.type { display: flex; align-items: center; padding: 1px 39px 0 33px; background: #f3f3f3; color: #aaa; white-space: nowrap; }
.type svg { width: 28px; height: 28px; margin: -2px 21px 0 0; color: #b2b2b2; overflow: visible; }
.type.wide svg { width: 32px; margin: -2px 19px 0 -2px; }
.type span { flex: 1; }
.aws-text { font: 700 12.500px Lato, sans-serif; }

.group { position: relative; height: 222px; margin-top: 60px; padding: 60px; border-radius: 8px; background: #f3f3f3; }
.group + .group { margin-top: 40px; }
.group-title { position: absolute; left: 50%; top: -30px; height: 52px; line-height: 52px; padding: 0 29px; transform: translateX(-50%); border-radius: 30px; background: #fff; color: #d38465; font-size: 22px; font-weight: 700; white-space: nowrap; }
.group-close { position: absolute; right: 25px; top: -29px; width: 58px; height: 58px; border-radius: 50%; background: #fff; color: #999; display: flex; align-items: center; justify-content: center; }
.cond-row { display: flex; align-items: center; }
.cond { width: 860px; height: 92px; padding: 12px 0 0 12px; border-radius: 8px; background: #fff; display: flex; }
.selects { width: 764px; height: 70px; border: 2px solid #e2e2e2; border-radius: 8px; background: #f3f3f3; display: flex; overflow: hidden; }
.sel { display: flex; align-items: center; justify-content: space-between; padding: 0 28px; border-right: 2px solid #e2e2e2; color: #6a6a6a; }
.sel svg, .side-select svg { color: #7f9fd3; }
.sel-field { width: 306px; }
.sel-op { width: 152px; }
.sel-value { flex: 1; border-right: 0; padding-right: 27px; }
.cond-x { margin: 21px 0 0 35px; color: #999; }
.cond-add { margin: -6px 0 0 43px; color: #5a9c70; }
.add-group { height: 80px; margin-top: 40px; border: 2px dashed #ddd; border-radius: 8px; display: flex; align-items: center; justify-content: center; gap: 20px; color: #d38465; font-weight: 700; }
.add-group svg { margin-bottom: 1px; }
.add-group span { padding-top: 8px; }

.footer { height: 100px; flex: none; display: flex; align-items: center; padding-left: 682px; background: #f3f3f3; font-weight: 700; }
.foot-link { display: flex; align-items: center; gap: 22px; }
.clear { width: 262px; color: #888; }
.update { width: 200px; height: 70px; line-height: 70px; margin-top: 2px; border-radius: 8px; background: #4c82c6; box-shadow: 4px 4px 0 #dcdcdf; color: #fff; text-align: center; }
.quick { margin-left: 80px; color: #955ba8; }

.stat { height: 232px; text-align: center; color: #666; }
.stat + .stat { border-top: 2px solid #e8e8e8; border-bottom: 2px solid #e8e8e8; height: 234px; padding-top: 29px; margin-top: -31px; }
.stat h2 { font-size: 26px; line-height: 54px; }
.stat p { font-size: 64px; line-height: 78px; margin-top: 29px; font-weight: 700; }
.side-select { height: 70px; margin-top: 40px; padding: 0 29px 2px 28px; border: 2px solid #e2e2e2; border-radius: 8px; background: #f3f3f3; display: flex; align-items: center; justify-content: space-between; }
.pie { width: 484px; height: 484px; margin: 40px auto 0; }
.legend { display: grid; grid-template-columns: 292px 292px; margin: 57px 0 0 123px; font-size: 22px; color: #777; }
.legend-item { height: 30px; display: flex; align-items: center; gap: 15px; }
.legend-item i { width: 22px; height: 22px; border-radius: 50%; }
.legend-item span { padding-top: 1px; }
```
